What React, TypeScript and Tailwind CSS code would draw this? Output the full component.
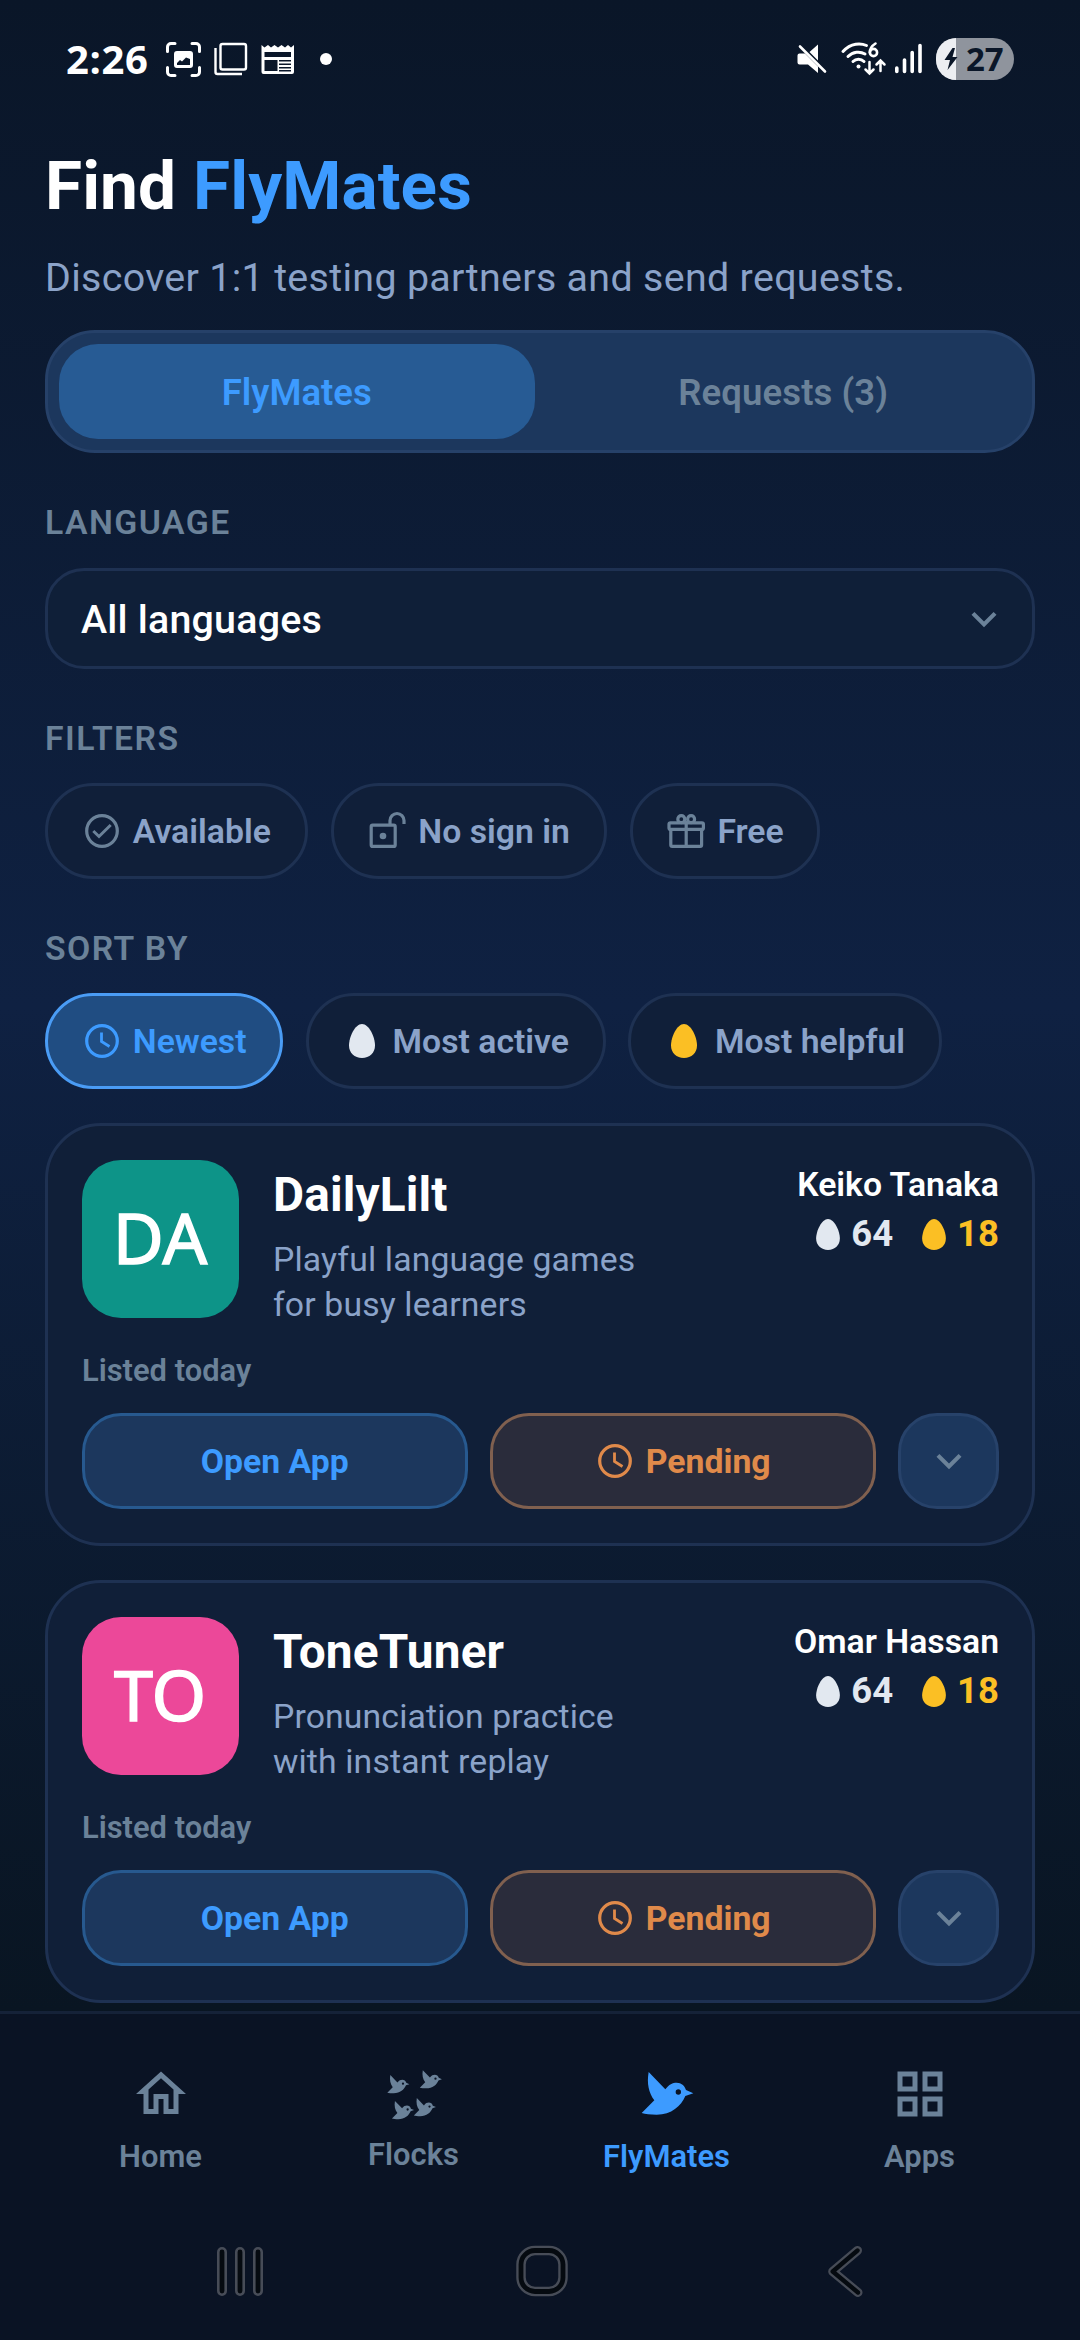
import type { ReactNode } from "react";
import clsx from "clsx";

interface AppCardType {
  initials: string;
  logoClass: string;
  name: string;
  description: string;
  owner: string;
  silver: number;
  gold: number;
}

const cards: AppCardType[] = [
  {
    initials: "DA",
    logoClass: "bg-[#0d9488]",
    name: "DailyLilt",
    description: "Playful language games\nfor busy learners",
    owner: "Keiko Tanaka",
    silver: 64,
    gold: 18,
  },
  {
    initials: "TO",
    logoClass: "bg-[#ec4899]",
    name: "ToneTuner",
    description: "Pronunciation practice\nwith instant replay",
    owner: "Omar Hassan",
    silver: 64,
    gold: 18,
  },
];

const BIRD =
  "M21 0 L71 52 C82 37 93 32 105 32 C119 32 129 41 133 54 L155 64 L131 72 C118 102 90 128 45 128 C25 128 11 126 0 123 L38 85 C21 62 15 34 21 0Z M110 52a8 8 0 1 0 0 16a8 8 0 1 0 0-16Z";

const Egg = ({ className }: { className: string }) => (
  <svg viewBox="0 0 26 34" className={className} fill="currentColor">
    <path d="M13 0C20 0 26 13 26 21.5C26 29 20.5 34 13 34S0 29 0 21.5C0 13 6 0 13 0Z" />
  </svg>
);

const Clock = () => (
  <svg
    viewBox="0 0 40 40"
    className="size-[40px]"
    fill="none"
    stroke="currentColor"
    strokeWidth="3.2"
  >
    <circle cx="20" cy="20" r="15.3" />
    <path d="M19.5 11.5V20.5L27.5 25.5" strokeWidth="2.8" />
  </svg>
);

const CheckCircle = () => (
  <svg
    viewBox="0 0 40 40"
    className="size-[40px]"
    fill="none"
    stroke="currentColor"
    strokeWidth="3.2"
  >
    <circle cx="20" cy="20" r="15.3" />
    <path d="M11.3 20L17 25.5L28.7 14" strokeWidth="3" />
  </svg>
);

const LockOpen = () => (
  <svg
    viewBox="0 0 40 40"
    className="size-[40px]"
    fill="none"
    stroke="currentColor"
    strokeWidth="3.2"
  >
    <rect x="4.2" y="14.2" width="24" height="21.2" rx="1.5" />
    <path d="M23 14V9.5a7 7 0 0 1 14 0V13" />
    <circle cx="16" cy="25" r="3.3" fill="currentColor" stroke="none" />
  </svg>
);

const Gift = () => (
  <svg
    viewBox="0 0 40 40"
    className="size-[40px]"
    fill="none"
    stroke="currentColor"
    strokeWidth="3.2"
  >
    <rect x="3" y="11.8" width="34.4" height="6.6" rx="1.5" />
    <path d="M4.8 18.5V34a1.4 1.4 0 0 0 1.4 1.4H34.2a1.4 1.4 0 0 0 1.4-1.4V18.5M20.2 10V35" />
    <circle cx="15.3" cy="8.2" r="3.5" />
    <circle cx="25.1" cy="8.2" r="3.5" />
  </svg>
);

const ChevronDown = () => (
  <svg viewBox="0 0 24 24" className="size-[50px]" fill="#6b8299">
    <path d="M16.59 8.59L12 13.17 7.41 8.59 6 10l6 6 6-6z" />
  </svg>
);

const StatusBar = () => (
  <div className="flex h-[118px] shrink-0 items-center justify-between pr-[66px] pl-[66px] text-white">
    <div className="flex items-center">
      <span className="w-[84px] font-['Open_Sans',sans-serif] text-[40px] leading-[44px] font-bold tracking-[0.6px]">
        2:26
      </span>
      <svg
        viewBox="150 38 190 42"
        className="h-[42px] w-[190px]"
        fill="none"
        stroke="currentColor"
      >
        <path
          d="M167.5 51.5V47a3.5 3.5 0 0 1 3.5-3.5H175M192 43.5H196a3.5 3.5 0 0 1 3.5 3.5V51.5M199.5 67.5V72a3.5 3.5 0 0 1-3.5 3.5H192M175 75.5H171a3.5 3.5 0 0 1-3.5-3.5V67.5"
          strokeWidth="3"
          strokeLinecap="round"
        />
        <path
          d="M177 51H190a3 3 0 0 1 3 3V65a3 3 0 0 1-3 3H177a3 3 0 0 1-3-3V54a3 3 0 0 1 3-3ZM177 65H190V59L186 57.5L182 61.5L180 60L177 63Z"
          fill="currentColor"
          fillRule="evenodd"
          stroke="none"
        />
        <rect x="220.5" y="44" width="25.5" height="25.5" rx="2" strokeWidth="2.4" />
        <path d="M215.5 48V72a2 2 0 0 0 2 2H242" strokeWidth="2.4" />
        <path
          d="M261.5 45L264.5 47.5L268 45L271 47.5L274.5 45L278 47.5L281.5 45L285 47.5L288 45L291 47.5L294 45V72a2 2 0 0 1-2 2H263.5a2 2 0 0 1-2-2ZM264.5 52V57H291V52ZM264.5 60V71H277.5V60ZM279 60V61.5H291V60ZM279 63.5V65H291V63.5ZM279 67V68.5H291V67ZM279 70V71.5H291V70Z"
          fill="currentColor"
          fillRule="evenodd"
          stroke="none"
        />
        <circle cx="326" cy="59" r="6" fill="currentColor" stroke="none" />
      </svg>
    </div>
    <div className="flex items-center">
      <svg
        viewBox="796 38 130 42"
        className="h-[42px] w-[130px]"
        fill="none"
        stroke="currentColor"
        strokeLinecap="round"
      >
        <path
          d="M799.5 53.5H805L818 66.5V73L808 64.5H799.5a2 2 0 0 1-2-2V55.5a2 2 0 0 1 2-2ZM818 44.5V60.5L809.5 52Z"
          fill="currentColor"
          stroke="none"
        />
        <path d="M800 46.5L825 71.5" strokeWidth="2.6" />
        <path
          d="M843 51.5C851 42.5 861 43 866.5 45.5M848 56.5C853 51.5 860 51 865 54M853 61.5C856 58.5 861 58.5 864 61.5"
          strokeWidth="3"
        />
        <circle cx="858.5" cy="66.5" r="2" fill="currentColor" stroke="none" />
        <path d="M875.5 43.5C871.5 46 869.8 49 869.8 52.5" strokeWidth="2.6" />
        <circle cx="873.5" cy="52.5" r="3.6" strokeWidth="2.6" />
        <path
          d="M869.5 62V73M865.5 69.5L869.5 73.5L873.5 69.5M880.5 71V61M876.5 64.5L880.5 60.5L884.5 64.5"
          strokeWidth="2.5"
        />
        <path
          d="M896.8 68V71.5M904.5 60V71.5M912.2 52.5V71.5M920 45.5V71.5"
          strokeWidth="3.6"
        />
      </svg>
      <div className="relative ml-[10px] flex h-[42px] w-[78px] items-center rounded-full bg-[#8f949d]">
        <div className="h-full w-[20px] rounded-l-[21px] bg-[#eceef2]" />
        <svg viewBox="0 0 14 22" className="absolute left-[8px] h-[22px] w-[14px]" fill="#0a1628">
          <path d="M8.5 0L0.5 12H6L3.5 22L13.5 9H8.5L11 0Z" />
        </svg>
        <span className="ml-[10px] font-['Open_Sans',sans-serif] text-[33px] leading-[46px] font-bold text-[#0a1628]">
          27
        </span>
      </div>
    </div>
  </div>
);

const SectionLabel = ({ children }: { children: ReactNode }) => (
  <h2 className="mt-[50px] text-[33.75px] leading-[40px] font-semibold tracking-[1.45px] text-[#6b8299]">
    {children}
  </h2>
);

interface ChipType {
  icon: ReactNode;
  label: string;
  active?: boolean;
}

const Chip = ({ icon, label, active }: ChipType) => (
  <button
    className={clsx(
      "flex h-[96px] items-center gap-[11px] rounded-full border-[3px] px-[33.75px] text-[33.75px] font-semibold",
      active
        ? "border-[#4a9cf5] bg-[#204d82] text-[#3d9bff]"
        : "border-[#1e3152] bg-[#101f39] text-[#6b8299]"
    )}
  >
    {icon}
    <span className={clsx("pt-[2px]", active ? "text-[#3d9bff]" : "text-[#8ba3c9]")}>
      {label}
    </span>
  </button>
);

const AppCard = ({
  initials,
  logoClass,
  name,
  description,
  owner,
  silver,
  gold,
}: AppCardType) => (
  <article className="mt-[34px] h-[423px] shrink-0 rounded-[56px] border-[3px] border-[#1e3152] bg-[#101f38] pt-[34px] pr-[33px] pl-[34px]">
    <div className="flex items-start">
      <div
        className={clsx(
          "flex h-[158px] w-[157px] items-center justify-center rounded-[39px] pr-px pb-[3px] font-['Noto_Sans',sans-serif] text-[70px] text-white [-webkit-text-stroke:1.5px_white]",
          logoClass
        )}
      >
        {initials}
      </div>
      <div className="ml-[34px] pt-[7px]">
        <h3 className="text-[47.8px] leading-[56px] font-bold tracking-[0.15px] text-white">
          {name}
        </h3>
        <p className="mt-[14px] text-[33.75px] leading-[45px] tracking-[0.14px] whitespace-pre-line text-[#8ba3c9]">
          {description}
        </p>
      </div>
      <div className="ml-auto flex flex-col items-end pt-[5px]">
        <div className="text-[33.75px] leading-[40px] font-semibold text-white">{owner}</div>
        <div className="mt-[8px] flex items-center text-[36.5px] leading-[42px] font-bold">
          <Egg className="h-[31px] w-[24px] text-[#e2e8f0]" />
          <span className="ml-[11px] text-[#e2e8f0]">{silver}</span>
          <Egg className="ml-[29px] h-[31px] w-[24px] text-[#fbbf24]" />
          <span className="ml-[11px] text-[#fbbf24]">{gold}</span>
        </div>
      </div>
    </div>
    <div className="mt-[26px] text-[30.9px] leading-[36px] font-semibold text-[#6b8299]">
      Listed today
    </div>
    <div className="mt-[24px] flex h-[96px] gap-[22.5px] text-[33.75px] font-bold">
      <button className="flex-1 rounded-[39px] border-[3px] border-[#27598f] bg-[#1c375d] pt-[2px] text-[#3d9bff]">
        Open App
      </button>
      <button className="flex flex-1 items-center justify-center gap-[11px] rounded-[39px] border-[3px] border-[#80604f] bg-[#2a2c3b] text-[#e08a4a]">
        <Clock />
        <span className="pt-[2px]">Pending</span>
      </button>
      <button className="flex w-[101px] items-center justify-center rounded-[39px] border-[3px] border-[#27426a] bg-[#1c375d]">
        <ChevronDown />
      </button>
    </div>
  </article>
);

const navLabel = "text-[30.9px] leading-[36px] font-semibold";

const BottomNav = () => (
  <nav className="flex h-[197px] shrink-0 border-t-[3px] border-[#152238] px-[34px] pt-[50px] text-[#6b8299]">
    <div className="flex flex-1 flex-col items-center">
      <svg viewBox="0 0 24 24" className="mb-[15px] size-[60px]" fill="currentColor">
        <path d="M12 5.69l5 4.5V18h-2v-6H9v6H7v-7.81l5-4.5M12 3L2 12h3v8h6v-6h2v6h6v-8h3L12 3z" />
      </svg>
      <span className={navLabel}>Home</span>
    </div>
    <div className="flex flex-1 flex-col items-center">
      <svg
        viewBox="-10 -18 181 174"
        className="mb-[15px] h-[58px] w-[60px]"
        fill="currentColor"
        fillRule="evenodd"
      >
        <path transform="translate(0 15) scale(0.43)" d={BIRD} />
        <path transform="translate(98 0) scale(0.43)" d={BIRD} />
        <path transform="translate(14 93) scale(0.43)" d={BIRD} />
        <path transform="translate(80 84) scale(0.43)" d={BIRD} />
      </svg>
      <span className={navLabel}>Flocks</span>
    </div>
    <div className="flex flex-1 flex-col items-center text-[#3d9bff]">
      <svg
        viewBox="-14 -24 180 180"
        className="mb-[15px] size-[60px]"
        fill="currentColor"
        fillRule="evenodd"
      >
        <path d={BIRD} />
      </svg>
      <span className={navLabel}>FlyMates</span>
    </div>
    <div className="flex flex-1 flex-col items-center">
      <svg
        viewBox="0 0 24 24"
        className="mb-[15px] size-[60px]"
        fill="currentColor"
        fillRule="evenodd"
      >
        <path d="M3 3h8v8H3zM5 5v4h4V5zM13 3h8v8h-8zM15 5v4h4V5zM3 13h8v8H3zM5 15v4h4v-4zM13 13h8v8h-8zM15 15v4h4v-4z" />
      </svg>
      <span className={navLabel}>Apps</span>
    </div>
  </nav>
);

// Android three-button bar
const SystemNav = () => (
  <div className="flex flex-1 items-start pt-[37px] pl-[216px]">
    <svg
      viewBox="0 0 48 52"
      className="h-[52px] w-[48px]"
      fill="#050a10"
      stroke="#474c57"
      strokeWidth="2.6"
    >
      <rect x="2.3" y="3.3" width="7.4" height="46.4" rx="3.7" />
      <rect x="20.3" y="3.3" width="7.4" height="46.4" rx="3.7" />
      <rect x="38.3" y="3.3" width="7.4" height="46.4" rx="3.7" />
    </svg>
    <svg viewBox="0 0 52 52" className="ml-[252px] h-[52px] w-[52px]" fill="none">
      <rect x="5" y="5.5" width="42" height="41" rx="14" stroke="#474c57" strokeWidth="9.5" />
      <rect x="5" y="5.5" width="42" height="41" rx="14" stroke="#050a10" strokeWidth="4.8" />
    </svg>
    <svg
      viewBox="0 0 36 52"
      className="ml-[260px] h-[52px] w-[36px]"
      fill="none"
      strokeLinecap="round"
      strokeLinejoin="round"
    >
      <path d="M29.5 5.5L4.7 26.5L30 47.5" stroke="#474c57" strokeWidth="9" />
      <path d="M29.5 5.5L4.7 26.5L30 47.5" stroke="#050a10" strokeWidth="4.4" />
    </svg>
  </div>
);

export default function App() {
  return (
    <div className="flex h-[2340px] w-[1080px] flex-col overflow-hidden bg-[#0a1324] font-[Roboto,sans-serif]">
      <div className="flex h-[2011px] shrink-0 flex-col overflow-hidden bg-linear-to-b from-[#0a1628] via-[#0f2142] to-[#091522]">
        <StatusBar />
        <main className="flex flex-col px-[45px] pt-[28px]">
          <h1 className="text-[67.5px] leading-[80px] font-bold tracking-[0.1px] text-white">
            Find <span className="text-[#3d9bff]">FlyMates</span>
          </h1>
          <p className="mt-[27px] text-[39.4px] leading-[50px] tracking-[0.32px] text-[#8ba3c9]">
            Discover 1:1 testing partners and send requests.
          </p>
          <div className="mt-[27px] flex h-[123px] gap-[11px] rounded-[50px] border-[3px] border-[#264169] bg-[#1c375d] p-[11px] text-[36.5px] font-semibold">
            <button className="flex-1 rounded-[39px] bg-[#275b94] pt-[4px] text-[#3d9bff]">
              FlyMates
            </button>
            <button className="flex-1 rounded-[39px] pt-[4px] tracking-[0.1px] text-[#6b8299]">
              Requests (3)
            </button>
          </div>

          <SectionLabel>LANGUAGE</SectionLabel>
          <div className="mt-[25px] flex h-[101px] items-center justify-between rounded-[39px] border-[3px] border-[#1e3152] bg-[#0f1f38] pr-[23px] pl-[33px] text-[39.4px] font-medium text-white">
            <span className="pt-[3px] tracking-[0.2px]">All languages</span>
            <ChevronDown />
          </div>

          <SectionLabel>FILTERS</SectionLabel>
          <div className="mt-[24px] flex gap-[23px]">
            <Chip icon={<CheckCircle />} label="Available" />
            <Chip icon={<LockOpen />} label="No sign in" />
            <Chip icon={<Gift />} label="Free" />
          </div>

          <SectionLabel>SORT BY</SectionLabel>
          <div className="mt-[24px] flex gap-[22.5px]">
            <Chip icon={<Clock />} label="Newest" active />
            <Chip
              icon={<Egg className="mx-[6.5px] h-[34px] w-[26px] text-[#e2e8f0]" />}
              label="Most active"
            />
            <Chip
              icon={<Egg className="mx-[6.5px] h-[34px] w-[26px] text-[#fbbf24]" />}
              label="Most helpful"
            />
          </div>

          {cards.map((card) => (
            <AppCard key={card.name} {...card} />
          ))}
        </main>
      </div>
      <BottomNav />
      <SystemNav />
    </div>
  );
}
